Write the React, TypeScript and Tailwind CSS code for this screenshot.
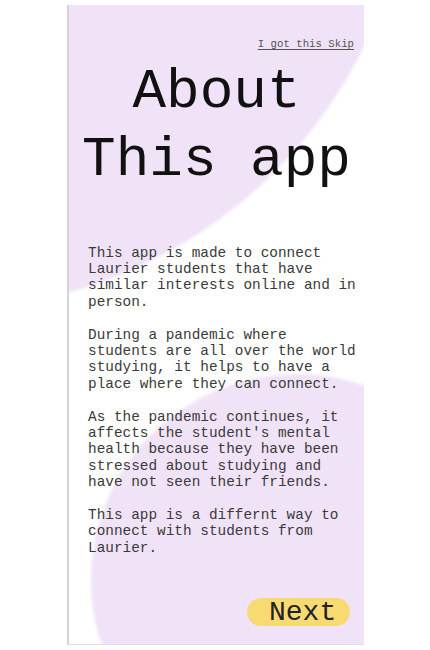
export default function App() {
  const paragraphs = [
    "This app is made to connect Laurier students that have similar interests online and in person.",
    "During a pandemic where students are all over the world studying, it helps to have a place where they can connect.",
    "As the pandemic continues, it affects the student's mental health because they have been stressed about studying and have not seen their friends.",
    "This app is a differnt way to connect with students from Laurier.",
  ]

  return (
    <div className="min-h-[650px] w-[430px] bg-white pt-[5px]">
      <div
        className="relative ml-[67px] flex h-[640px] w-[297px] flex-col overflow-hidden border-b border-l-2 border-b-[#dedede] border-l-[#d4d4d4] bg-white"
        style={{ fontFamily: '"Liberation Mono", "Courier New", monospace' }}
      >
        {/* background blobs */}
        <div className="absolute left-[-597px] top-[-635px] h-[940px] w-[940px] rounded-full bg-[#f0e3f7] blur-[1.5px]" />
        <div className="absolute left-[22px] top-[369px] h-[412px] w-[412px] rounded-full bg-[#f0e3f7] blur-[1.5px]" />

        <div className="relative flex h-full flex-col">
          {/* skip link */}
          <div className="flex justify-end pr-[10px] pt-[33px]">
            <a className="text-[10.7px] leading-[12.5px] text-[#555] underline underline-offset-2">
              I got this Skip
            </a>
          </div>

          {/* title */}
          <h1 className="mt-[7px] text-center text-[56px] leading-[68px] font-normal text-[#111]">
            About
            <br />
            This app
          </h1>

          {/* body */}
          <div className="mt-[51px] w-[291px] space-y-[16.4px] pl-[19px] text-[14.4px] leading-[16.4px] text-[#3a3a3a]">
            {paragraphs.map((p) => (
              <p key={p}>{p}</p>
            ))}
          </div>

          {/* next button */}
          <div className="mt-auto flex justify-end pb-[18px] pr-[14px]">
            <button className="h-[28px] w-[103px] rounded-full bg-[#f8da73] pl-[22px] pt-[1px] text-left text-[28px] leading-[28px] text-[#222]">
              Next
            </button>
          </div>
        </div>
      </div>
    </div>
  )
}
